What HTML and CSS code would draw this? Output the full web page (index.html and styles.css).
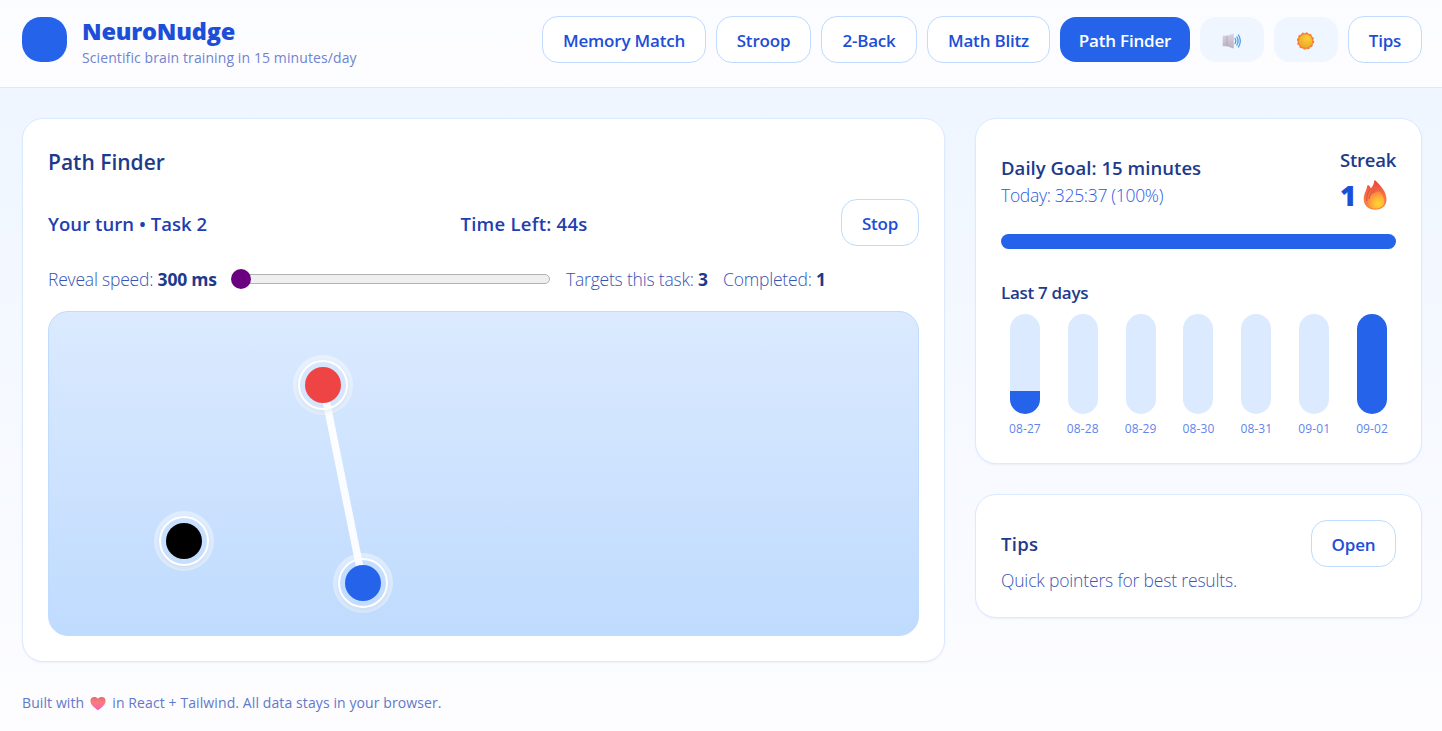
FILE: index.html
```html
<!DOCTYPE html>
<html lang="en">
<head>
<meta charset="utf-8">
<title>NeuroNudge</title>
<link rel="stylesheet" href="styles.css">
</head>
<body>
<header class="topbar">
  <div class="brand">
    <div class="logo"></div>
    <div>
      <div class="brand-name">NeuroNudge</div>
      <div class="brand-sub">Scientific brain training in 15 minutes/day</div>
    </div>
  </div>
  <nav class="nav">
    <button class="btn w-memory">Memory Match</button>
    <button class="btn w-stroop">Stroop</button>
    <button class="btn w-back">2-Back</button>
    <button class="btn w-math">Math Blitz</button>
    <button class="btn btn-active w-path">Path Finder</button>
    <button class="btn btn-soft" aria-label="Sound">
      <svg width="20" height="18" viewBox="0 0 20 18">
        <defs><linearGradient id="spk" x1="0" y1="0" x2="0" y2="1"><stop offset="0" stop-color="#dbd5de"/><stop offset="1" stop-color="#b9b0c1"/></linearGradient></defs>
        <path d="M1.3 3.800H5L10.800 1.700q1-.4 1 .6v13.400q0 1-1 .6L5 14.200H1.300q-.6 0-.6-.7v-9q0-.7.6-.7z" fill="url(#spk)"/>
        <path d="M5 3.800v10.400" stroke="#aaa1b2" stroke-width=".7"/>
        <path d="M13 6.500q1.700 2.500 0 5M14.800 4.800q2.600 4.200 0 8.400M16.500 3q3.600 6 0 12" fill="none" stroke="#3f97e8" stroke-width="1.200" stroke-linecap="round"/>
      </svg>
    </button>
    <button class="btn btn-soft" aria-label="Theme">
      <svg width="18" height="18" viewBox="0 0 18 18">
        <defs><radialGradient id="sun" cx=".62" cy=".3" r=".75"><stop offset="0" stop-color="#fcd034"/><stop offset="1" stop-color="#eba52c"/></radialGradient></defs>
        <circle cx="8.500" cy="9" r="8" fill="#f87f2e"/>
        <circle cx="8.500" cy="9" r="8.100" fill="none" stroke="#f8762e" stroke-width="1.100" stroke-dasharray="2.120 2.120"/>
        <circle cx="8.500" cy="9" r="6.800" fill="url(#sun)"/>
      </svg>
    </button>
    <button class="btn w-tips">Tips</button>
  </nav>
</header>

<main class="layout">
  <section class="card game">
    <h2 class="game-title">Path Finder</h2>
    <div class="status">
      <div class="status-turn">Your turn • Task 2</div>
      <div class="status-time">Time Left: 44s</div>
      <button class="btn w-stop">Stop</button>
    </div>
    <div class="controls">
      <span class="speed">Reveal speed: <b>300 ms</b></span>
      <div class="slider"><div class="thumb"></div></div>
      <span class="targets">Targets this task: <b>3</b></span>
      <span class="completed">Completed: <b>1</b></span>
    </div>
    <div class="arena">
      <svg class="trail" width="869" height="323" viewBox="0 0 869 323">
        <line x1="274" y1="73" x2="314" y2="271" stroke="#fff" stroke-opacity=".9" stroke-width="7.500"/>
      </svg>
      <div class="node node-red"><i></i></div>
      <div class="node node-black"><i></i></div>
      <div class="node node-blue"><i></i></div>
    </div>
  </section>

  <aside class="side">
    <section class="card goal">
      <div class="goal-head">
        <div>
          <div class="goal-title">Daily Goal: 15 minutes</div>
          <div class="goal-today">Today: 325:37 (100%)</div>
        </div>
        <div class="streak">
          <div class="streak-label">Streak</div>
          <div class="streak-value"><span>1</span>
            <svg width="24" height="30" viewBox="0 0 24 30">
              <defs>
                <linearGradient id="fl" x1=".5" y1="0" x2=".5" y2="1"><stop offset="0" stop-color="#e9453b"/><stop offset=".55" stop-color="#f87444"/><stop offset="1" stop-color="#f88a3a"/></linearGradient>
                <radialGradient id="fi" cx=".65" cy=".72" r=".7"><stop offset="0" stop-color="#ffd62f"/><stop offset=".45" stop-color="#feb936"/><stop offset="1" stop-color="#fb8444"/></radialGradient>
              </defs>
              <path d="M5.500 5.300C7 6.300 7.600 7.500 7.700 8.500 9.500 6.500 11 4 11.200 1q.2-1.200 1.200-.4C18 6 23.500 12 23.500 19.500 23.500 26 19 29.700 12.200 29.700S.7 25.500.7 19C.7 13.500 3.800 10 4.200 6q.3-1.200 1.300-.7z" fill="url(#fl)"/>
              <path d="M4.800 21.500C5 16 9 14 14.500 11.500c1.500-.6 3.500 1 4.800 3.200 1.300 2.200 2 4.400 2 6.800 0 4.600-3.800 7-8.800 7S4.600 26 4.800 21.500z" fill="url(#fi)"/>
              <path d="M8.400 8.200C5.200 12 3.200 15.500 3.800 21M12 9.500C8.500 13 6.300 15 6 19" fill="none" stroke="#d65343" stroke-width="1"/>
            </svg>
          </div>
        </div>
      </div>
      <div class="progress"></div>
      <h3 class="week-title">Last 7 days</h3>
      <div class="week">
        <div class="day"><div class="bar"><div class="fill" style="height:23%"></div></div><span>08-27</span></div>
        <div class="day"><div class="bar"></div><span>08-28</span></div>
        <div class="day"><div class="bar"></div><span>08-29</span></div>
        <div class="day"><div class="bar"></div><span>08-30</span></div>
        <div class="day"><div class="bar"></div><span>08-31</span></div>
        <div class="day"><div class="bar"></div><span>09-01</span></div>
        <div class="day"><div class="bar"><div class="fill" style="height:100%"></div></div><span>09-02</span></div>
      </div>
    </section>
    <section class="card tips">
      <div class="tips-head">
        <h3 class="tips-title">Tips</h3>
        <button class="btn w-open">Open</button>
      </div>
      <p class="tips-text">Quick pointers for best results.</p>
    </section>
  </aside>
</main>

<footer class="footer">
  <span class="foot-a">Built with</span>
  <svg width="16" height="15" viewBox="0 0 16 15">
    <defs><linearGradient id="ht" x1="0" y1="0" x2="0" y2="1"><stop offset="0" stop-color="#e8696e"/><stop offset=".4" stop-color="#f57d80"/><stop offset="1" stop-color="#ff5cb4"/></linearGradient></defs>
    <path d="M8 14.200C4 11.500.4 8.500.4 4.800.4 2.500 2 1 4.200 1 5.900 1 7.300 1.500 8 2.700 8.700 1.500 10.100 1 11.800 1 14 1 15.600 2.500 15.600 4.800c0 3.700-3.600 6.700-7.600 9.400z" fill="url(#ht)"/>
  </svg>
  <span class="foot-b">in React + Tailwind. All data stays in your browser.</span>
</footer>
</body>
</html>
```
FILE: styles.css
```css
* { box-sizing: border-box; }
body {
  margin: 0;
  min-height: 731px;
  font-family: "Open Sans", "Noto Sans", sans-serif;
  color: #1e3a8a;
  background: linear-gradient(#eff6ff 0, #eff6ff 100px, #fafbff 600px, #fdfdff 731px);
  white-space: nowrap;
  overflow: hidden;
}
h2, h3, p { margin: 0; }

.topbar {
  display: flex;
  justify-content: space-between;
  height: 88px;
  padding: 16px 20px 0 22px;
  background: linear-gradient(#fbfcff, #fdfdff);
  border-bottom: 1px solid #dbeafe;
}
.brand { display: flex; gap: 15px; padding-top: 1px; }
.logo { width: 45px; height: 45px; border-radius: 19px; background: #2563eb; }
.brand-name { font-size: 23.5px; line-height: 28px; font-weight: 800; color: #1d4ed8; letter-spacing: -0.2px; }
.brand-sub { margin-top: 2px; font-size: 14px; line-height: 22px; font-weight: 400; color: #6f84cf; letter-spacing: 0.1px; }

.nav { display: flex; align-items: center; gap: 10px; height: 47px; }
.btn {
  display: flex;
  align-items: center;
  justify-content: center;
  flex: none;
  height: 47px;
  padding: 2px 0 0;
  border: 1px solid #bfdbfe;
  border-radius: 16px;
  background: #fff;
  color: #1d4ed8;
  font: 600 17px/24px "Open Sans", "Noto Sans", sans-serif;
  letter-spacing: -0.2px;
}
.btn-active { height: 45px; border: 0; background: #2563eb; color: #fff; }
.btn-soft { width: 64px; height: 45px; border: 0; background: #eff6ff; }
.w-memory { width: 164px; }
.w-stroop { width: 95px; }
.w-back { width: 96px; }
.w-math { width: 123px; }
.w-path { width: 130px; }
.w-tips { width: 74px; }
.w-stop { width: 78px; }
.w-open { width: 85px; }

.layout {
  display: grid;
  grid-template-columns: 923px 447px;
  gap: 30px;
  align-items: start;
  padding: 30px 20px 0 22px;
}
.card {
  padding: 25px;
  border: 1px solid #dbeafe;
  border-radius: 21px;
  background: #fff;
  box-shadow: 0 1px 2px rgba(30, 58, 138, .06);
}
.game { height: 544px; }
.game-title { padding-top: 1px; font-size: 21px; line-height: 34px; font-weight: 600; letter-spacing: 0; }
.status {
  display: flex;
  align-items: center;
  justify-content: space-between;
  height: 47px;
  margin-top: 20px;
  font-size: 18.5px;
  font-weight: 600;
  color: #1e40af;
}
.status-turn { width: 159px; padding-top: 2px; letter-spacing: 0.05px; }
.status-time { width: 127px; padding-top: 2px; letter-spacing: 0.25px; }
.controls {
  display: flex;
  align-items: center;
  height: 26px;
  margin-top: 21px;
  font-size: 17.5px;
  font-weight: 300;
  line-height: 22px;
  color: #3654b4;
  letter-spacing: -0.2px;
}
.controls span { padding-bottom: 2px; }
.controls b { font-weight: 700; color: #1e3a8a; }
.speed { width: 184px; }
.targets { width: 157px; }
.slider {
  position: relative;
  width: 318px;
  height: 10px;
  margin: 0 16px 2px 0;
  border: 1px solid #b2b2b2;
  border-radius: 5px;
  background: #efefef;
}
.thumb { position: absolute; left: -2px; top: -6px; width: 20px; height: 20px; border-radius: 50%; background: #6a0080; }
.arena {
  position: relative;
  height: 325px;
  margin-top: 18px;
  border: 1px solid #bfdbfe;
  border-radius: 20px;
  background: linear-gradient(#dbeafe, #bfdbfe);
}
.trail { display: block; }
.node {
  position: absolute;
  display: flex;
  align-items: center;
  justify-content: center;
  width: 50px;
  height: 50px;
  border: 2px solid #fff;
  border-radius: 50%;
  box-shadow: 0 0 0 5px rgba(255, 255, 255, .4), 0 2px 5px rgba(0, 0, 0, .12);
}
.node i { width: 36px; height: 36px; border-radius: 50%; }
.node-red { left: 249px; top: 48px; }
.node-red i { background: #ef4444; }
.node-black { left: 110px; top: 204px; }
.node-black i { background: #000; }
.node-blue { left: 289px; top: 246px; }
.node-blue i { background: #2563eb; }

.side { display: grid; gap: 30px; }
.goal { height: 346px; }
.goal-head { display: flex; justify-content: space-between; height: 72px; }
.goal-title { margin-top: 10px; font-size: 18.5px; line-height: 28px; font-weight: 600; letter-spacing: 0.05px; }
.goal-today { font-size: 17.5px; line-height: 26px; font-weight: 300; color: #2d5be0; letter-spacing: -0.3px; }
.streak { width: 56px; }
.streak-label { margin-top: 2px; font-size: 18.5px; line-height: 28px; font-weight: 600; letter-spacing: -0.2px; }
.streak-value { display: flex; align-items: center; gap: 7px; height: 40px; padding-top: 2px; font-size: 28px; font-weight: 800; color: #1d4ed8; }
.progress { height: 15px; margin-top: 18px; border-radius: 8px; background: #2563eb; }
.week-title { margin-top: 31px; font-size: 17px; line-height: 26px; font-weight: 600; letter-spacing: -0.3px; }
.week { display: grid; grid-template-columns: repeat(7, 1fr); gap: 10px; margin-top: 8px; }
.day { display: flex; flex-direction: column; align-items: center; font-size: 12px; line-height: 18px; color: #6285ec; letter-spacing: 0.1px; }
.bar { display: flex; align-items: flex-end; width: 30px; height: 100px; margin-bottom: 6px; border-radius: 15px; background: #dbeafe; overflow: hidden; }
.fill { width: 100%; background: #2563eb; }

.tips { height: 124px; }
.tips-head { display: flex; align-items: center; justify-content: space-between; }
.tips-title { font-size: 18.5px; line-height: 28px; font-weight: 600; letter-spacing: 0.3px; }
.tips-text { font-size: 17.5px; line-height: 26px; font-weight: 300; color: #3d57b4; letter-spacing: -0.17px; }

.footer {
  display: flex;
  align-items: center;
  gap: 6px;
  padding: 29px 22px 0;
  font-size: 14px;
  line-height: 24px;
  color: #6278c8;
  letter-spacing: 0.1px;
}
```
